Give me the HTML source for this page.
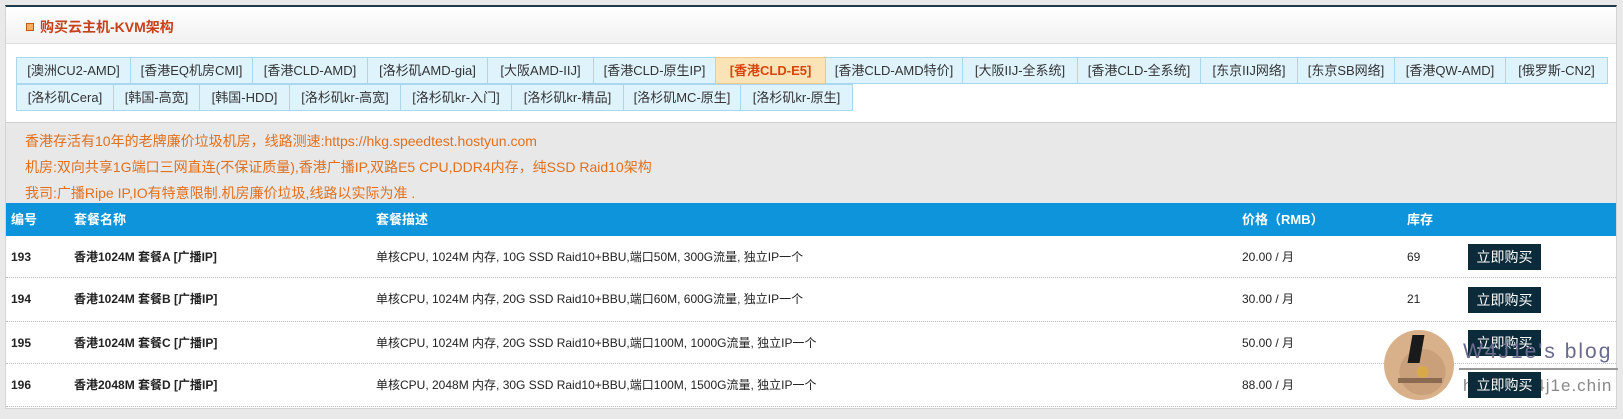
<!DOCTYPE html>
<html><head><meta charset="utf-8"><style>
*{margin:0;padding:0;box-sizing:border-box}
body{width:1623px;height:419px;background:#e9e9e9;font-family:"Liberation Sans","Noto Sans CJK SC",sans-serif;position:relative;overflow:hidden}
.panel{position:absolute;left:5px;top:5px;width:1612px;height:404px;background:#fff;border:1px solid #d4d4d4;border-top:2px solid #1f3a4a}
.hdr{position:absolute;left:0;top:0;width:100%;height:37px;background:linear-gradient(#fff,#f1f1f1);border-bottom:1px solid #ddd}
.hdr .ic{position:absolute;left:20px;top:16px;width:8px;height:8px;border:1px solid #c85a10;background:#f4b060}
.hdr .t{position:absolute;left:34px;top:10px;font-size:14px;font-weight:bold;color:#c8401a}
.tab{position:absolute;height:27px;background:#dff3fc;border:1px solid #a9d8ee;font-size:13px;color:#333;text-align:center;line-height:25px;white-space:nowrap}
.tab.on{background:#fbe3b8;border-color:#f0c88a;color:#d9440e;font-weight:bold}
.note{position:absolute;left:0;top:115px;width:100%;height:83px;background:#e8e8e8;border-top:1px solid #d0d0d0}
.note div{position:absolute;left:19px;font-size:14px;color:#e0701e;white-space:nowrap}
.th{position:absolute;left:0;top:196px;width:100%;height:33px;line-height:33px;background:#0d94da;color:#fff;font-weight:bold;font-size:13px}
.th span{position:absolute;top:0;white-space:nowrap}
.row{position:absolute;left:0;width:100%;border-bottom:1px dotted #bbb;font-size:12px;color:#222;line-height:42px}
.row span{position:absolute;top:0;white-space:nowrap}
.btn{position:absolute;left:1462px;width:73px;height:26px;background:#0c2b3a;color:#fff;font-size:14px;text-align:center;line-height:26px;top:8px}
</style></head><body>
<div class="panel">
<div class="hdr"><div class="ic"></div><div class="t">购买云主机-KVM架构</div></div>
<div class="tab" style="left:10px;top:50px;width:115px">[澳洲CU2-AMD]</div>
<div class="tab" style="left:124px;top:50px;width:123px">[香港EQ机房CMI]</div>
<div class="tab" style="left:246px;top:50px;width:116px">[香港CLD-AMD]</div>
<div class="tab" style="left:361px;top:50px;width:121px">[洛杉矶AMD-gia]</div>
<div class="tab" style="left:481px;top:50px;width:107px">[大阪AMD-IIJ]</div>
<div class="tab" style="left:587px;top:50px;width:123px">[香港CLD-原生IP]</div>
<div class="tab on" style="left:709px;top:50px;width:111px">[香港CLD-E5]</div>
<div class="tab" style="left:819px;top:50px;width:138px">[香港CLD-AMD特价]</div>
<div class="tab" style="left:956px;top:50px;width:116px">[大阪IIJ-全系统]</div>
<div class="tab" style="left:1071px;top:50px;width:124px">[香港CLD-全系统]</div>
<div class="tab" style="left:1194px;top:50px;width:98px">[东京IIJ网络]</div>
<div class="tab" style="left:1291px;top:50px;width:98px">[东京SB网络]</div>
<div class="tab" style="left:1388px;top:50px;width:112px">[香港QW-AMD]</div>
<div class="tab" style="left:1499px;top:50px;width:103px">[俄罗斯-CN2]</div>
<div class="tab" style="left:10px;top:77px;width:98px">[洛杉矶Cera]</div>
<div class="tab" style="left:107px;top:77px;width:87px">[韩国-高宽]</div>
<div class="tab" style="left:193px;top:77px;width:91px">[韩国-HDD]</div>
<div class="tab" style="left:283px;top:77px;width:112px">[洛杉矶kr-高宽]</div>
<div class="tab" style="left:394px;top:77px;width:112px">[洛杉矶kr-入门]</div>
<div class="tab" style="left:505px;top:77px;width:113px">[洛杉矶kr-精品]</div>
<div class="tab" style="left:617px;top:77px;width:118px">[洛杉矶MC-原生]</div>
<div class="tab" style="left:734px;top:77px;width:113px">[洛杉矶kr-原生]</div>
<div class="note">
<div style="top:8px">香港存活有10年的老牌廉价垃圾机房，线路测速:https://hkg.speedtest.hostyun.com</div>
<div style="top:34px">机房:双向共享1G端口三网直连(不保证质量),香港广播IP,双路E5 CPU,DDR4内存，纯SSD Raid10架构</div>
<div style="top:60px">我司:广播Ripe IP,IO有特意限制.机房廉价垃圾,线路以实际为准 .</div>
</div>
<div class="th"><span style="left:5px">编号</span><span style="left:68px">套餐名称</span><span style="left:370px">套餐描述</span><span style="left:1236px">价格（RMB）</span><span style="left:1401px">库存</span></div>
<div class="row" style="top:229px;height:42px"><span style="left:5px;font-weight:bold">193</span><span style="left:68px;font-weight:bold">香港1024M 套餐A [广播IP]</span><span style="left:370px">单核CPU, 1024M 内存, 10G SSD Raid10+BBU,端口50M, 300G流量, 独立IP一个</span><span style="left:1236px">20.00 / 月</span><span style="left:1401px">69</span><div class="btn">立即购买</div></div>
<div class="row" style="top:271px;height:44px"><span style="left:5px;font-weight:bold">194</span><span style="left:68px;font-weight:bold">香港1024M 套餐B [广播IP]</span><span style="left:370px">单核CPU, 1024M 内存, 20G SSD Raid10+BBU,端口60M, 600G流量, 独立IP一个</span><span style="left:1236px">30.00 / 月</span><span style="left:1401px">21</span><div class="btn" style="top:9px">立即购买</div></div>
<div class="row" style="top:315px;height:42px"><span style="left:5px;font-weight:bold">195</span><span style="left:68px;font-weight:bold">香港1024M 套餐C [广播IP]</span><span style="left:370px">单核CPU, 1024M 内存, 20G SSD Raid10+BBU,端口100M, 1000G流量, 独立IP一个</span><span style="left:1236px">50.00 / 月</span><div class="btn">立即购买</div></div>
<div class="row" style="top:357px;height:43px"><span style="left:5px;font-weight:bold">196</span><span style="left:68px;font-weight:bold">香港2048M 套餐D [广播IP]</span><span style="left:370px">单核CPU, 2048M 内存, 30G SSD Raid10+BBU,端口100M, 1500G流量, 独立IP一个</span><span style="left:1236px">88.00 / 月</span><div class="btn">立即购买</div></div>
</div>
<div style="position:absolute;left:1384px;top:330px;width:70px;height:70px;border-radius:50%;background:radial-gradient(circle at 55% 60%,#d8a84a 0 10%,#c9a07a 11% 40%,#d8b08a 41%);"></div>
<div style="position:absolute;left:1410px;top:335px;width:12px;height:28px;background:#1a1a1a;transform:skewX(-10deg)"></div>
<div style="position:absolute;left:1398px;top:378px;width:44px;height:5px;background:#8a6a50"></div>
<div style="position:absolute;left:1463px;top:340px;font-family:'Liberation Sans',sans-serif;font-size:21px;color:#6a6a90;letter-spacing:2px;white-space:nowrap">W4J1e's&nbsp;blog</div>
<div style="position:absolute;left:1459px;top:368px;width:159px;height:2px;background:#999"></div>
<div style="position:absolute;left:1463px;top:376px;width:150px;overflow:hidden;font-size:17px;color:#888;letter-spacing:1px;white-space:nowrap">https://w4j1e.chin.cool</div>
<div style="position:absolute;left:1468px;top:372px;width:73px;height:26px;background:#0c2b3a;color:#fff;font-size:14px;text-align:center;line-height:26px">立即购买</div>
</body></html>
